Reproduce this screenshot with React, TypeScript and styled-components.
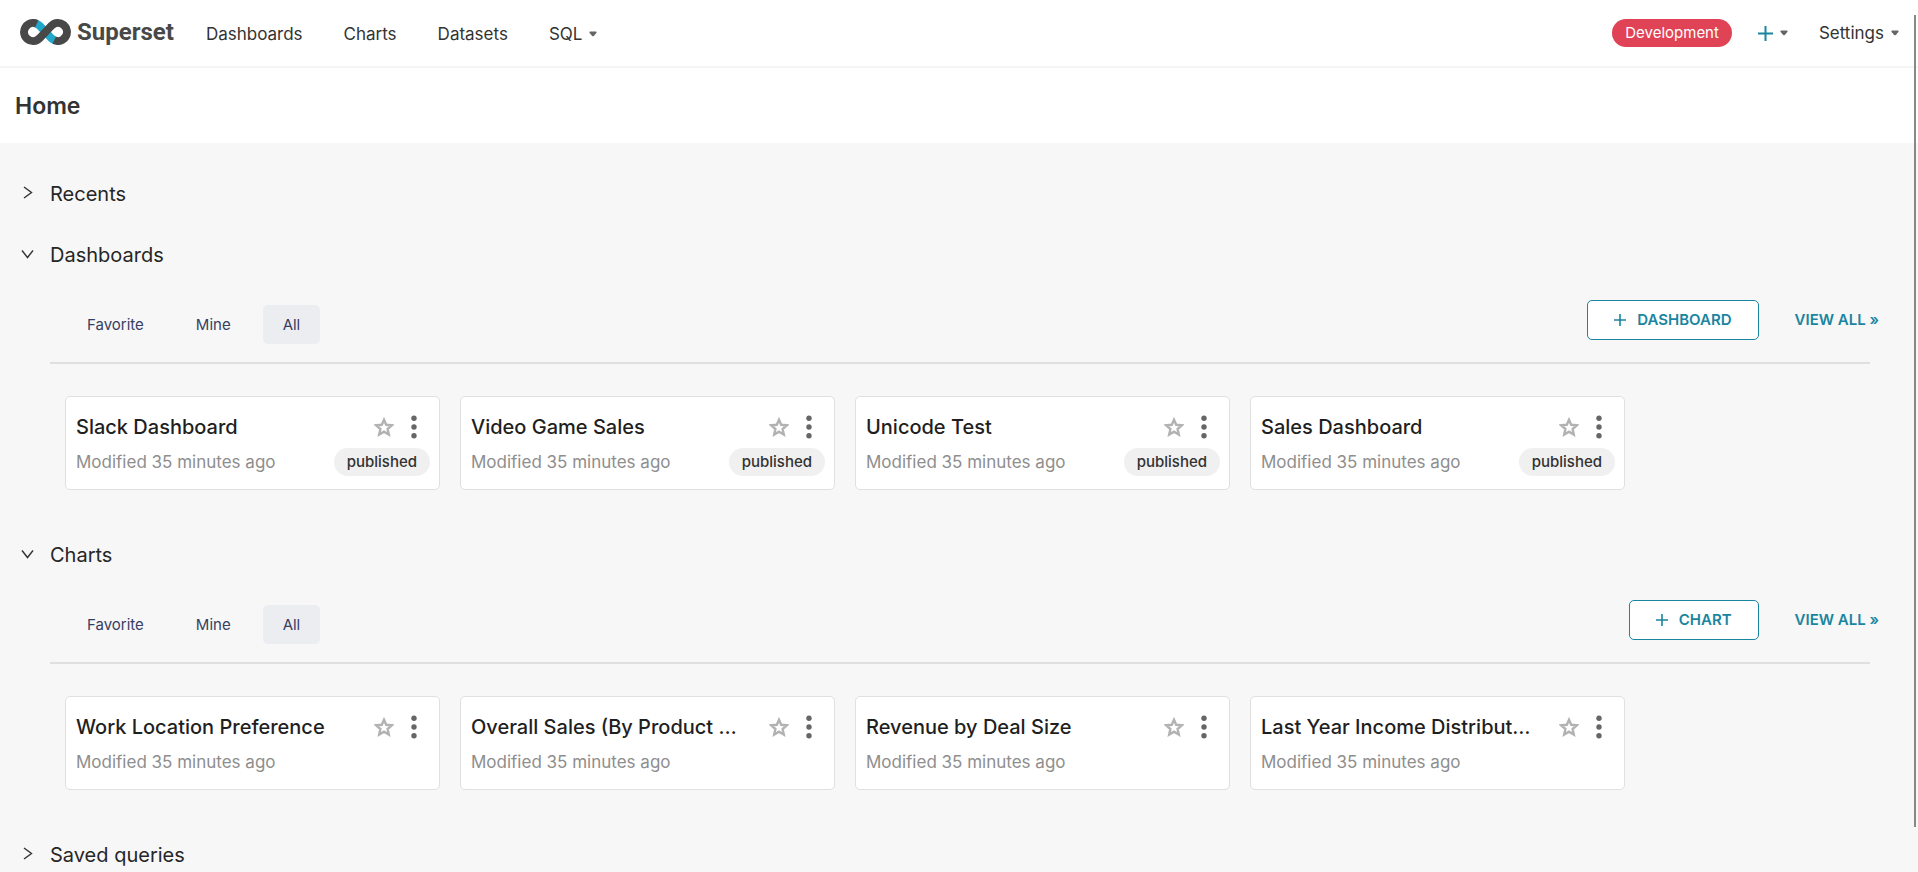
import React, { useState } from 'react';
import styled, { createGlobalStyle } from 'styled-components';

const teal = '#1a85a0';

const GlobalStyle = createGlobalStyle`
  *, *::before, *::after { box-sizing: border-box; }
  body {
    margin: 0;
    background: #f7f7f7;
    color: #333333;
    font-family: Inter, "Liberation Sans", sans-serif;
    font-size: 17px;
    line-height: 28px;
  }
  h1, h2, h3, p { margin: 0; padding: 0; }
  button { font: inherit; color: inherit; border: 0; padding: 0; background: none; cursor: pointer; }
  a { color: inherit; text-decoration: none; }
  svg { display: block; flex: none; }
`;

const Shell = styled.div`
  height: 100vh;
  overflow-y: auto;
  scrollbar-width: none;
`;

const ScrollThumb = styled.div`
  position: fixed;
  top: 15px;
  bottom: 45px;
  right: 2px;
  width: 2px;
  background: #888888;
`;

const Navbar = styled.header`
  display: flex;
  align-items: center;
  justify-content: space-between;
  height: 68px;
  padding: 0 19px 0 20px;
  border-bottom: 2px solid #f5f5f5;
  background: #ffffff;
`;

const Brand = styled.a`
  display: flex;
  align-items: center;
  gap: 6px;
  margin-right: 32px;
  padding-bottom: 3px;
  color: #484848;
  font-family: Roboto, "Liberation Sans", sans-serif;
  font-size: 24px;
  font-weight: 700;
`;

const NavGroup = styled.nav`
  display: flex;
  align-items: center;
`;

const NavLinks = styled.div`
  display: flex;
  gap: 41px;
  padding-top: 1px;
`;

const NavItem = styled.a`
  font-size: 17px;
`;

const NavMenu = styled.button<{ $gap?: number }>`
  display: flex;
  align-items: center;
  gap: 7px;
  margin-left: ${(p) => p.$gap || 0}px;
  font-size: 17px;
`;

const EnvTag = styled.span`
  padding: 0 13px;
  border-radius: 14px;
  background: #e04355;
  color: #ffffff;
  font-size: 15px;
`;

const PageHeader = styled.div`
  height: 75px;
  padding: 24px 15px;
  background: #ffffff;
`;

const PageTitle = styled.h1`
  font-size: 23px;
  font-weight: 600;
  line-height: 28px;
`;

const Content = styled.main`
  padding: 20px 48px 0 0;
`;

const SectionToggle = styled.button`
  display: flex;
  align-items: center;
  gap: 15px;
  width: 100%;
  height: 61px;
  padding-left: 20px;
  color: #262626;
  font-size: 20px;
  text-align: left;
`;

const SectionBody = styled.div`
  padding: 15px 0 34px 50px;
`;

const Toolbar = styled.div`
  display: flex;
  align-items: flex-start;
  justify-content: space-between;
  height: 64px;
  padding-left: 17px;
  border-bottom: 2px solid #e0e0e0;
`;

const Tabs = styled.div`
  display: flex;
  gap: 12px;
  padding-top: 5px;
`;

const Tab = styled.button<{ $active: boolean }>`
  height: 39px;
  padding: 0 20px;
  border-radius: 5px;
  background: ${(p) => (p.$active ? '#ecedf1' : 'transparent')};
  color: #363e63;
  font-size: 15px;
`;

const Actions = styled.div`
  display: flex;
  align-items: center;
  gap: 36px;
  height: 40px;
  margin-right: -9px;
  color: ${teal};
  font-size: 15px;
  font-weight: 600;
`;

const CreateButton = styled.button`
  display: flex;
  align-items: center;
  gap: 11px;
  height: 40px;
  padding: 0 26px;
  border: 1px solid ${teal};
  border-radius: 5px;
  background: #ffffff;
`;

const CardGrid = styled.div`
  display: grid;
  grid-template-columns: repeat(auto-fit, 375px);
  gap: 20px;
  padding: 32px 0 0 15px;
`;

const Card = styled.article`
  height: 94px;
  padding: 15px 9px 0 10px;
  border: 1px solid #e0e0e0;
  border-radius: 5px;
  background: #ffffff;
`;

const CardRow = styled.div`
  display: flex;
  align-items: center;
  justify-content: space-between;
`;

const CardTitle = styled.h3`
  max-width: 270px;
  overflow: hidden;
  color: #1f1f1f;
  font-size: 20px;
  font-weight: 500;
  line-height: 30px;
  text-overflow: ellipsis;
  white-space: nowrap;
`;

const CardActions = styled.div`
  display: flex;
  align-items: center;
  gap: 16px;
  padding-right: 12px;
`;

const CardMeta = styled(CardRow)`
  height: 36px;
  padding-top: 4px;
`;

const Modified = styled.p`
  color: #8e8e8e;
  font-size: 17px;
`;

const StatusTag = styled.span`
  padding: 0 13px;
  border-radius: 14px;
  background: #f0f0f0;
  color: #323232;
  font-size: 15px;
  font-weight: 500;
`;

const Logo = () => (
  <svg width="51" height="26" viewBox="0 0 51 26" fill="none" strokeWidth="8" aria-hidden="true">
    <path d="M16.4 4.7Q18.2 5.4 19.4 6.6L31.6 19.4Q32.8 20.6 34.6 21.3" stroke="#20a7c9" />
    <path d="M16.8 4.8A9 9 0 1 0 19.4 19.4L31.6 6.6A9 9 0 1 1 34.2 21.2" stroke="#484848" />
  </svg>
);

const Caret = () => (
  <svg width="8" height="6" viewBox="0 0 8 6" fill="#666666" aria-hidden="true">
    <path d="M1 0.5h6q1 0.4 0.4 1.4L4.8 4.9q-0.8 0.8-1.6 0L0.6 1.9Q0 0.9 1 0.5Z" />
  </svg>
);

const Plus = ({ size }: { size: number }) => (
  <svg width={size} height={size} viewBox="0 0 12 12" fill="none" stroke={teal} strokeWidth="1.6" aria-hidden="true">
    <path d="M6 0v12M0 6h12" />
  </svg>
);

const Chevron = ({ open }: { open: boolean }) => (
  <svg width="15" height="15" viewBox="0 0 15 15" fill="none" stroke="#333333" strokeWidth="1.4" aria-hidden="true">
    <path d={open ? 'M2 3.5l5.5 7L13 3.5' : 'M4 1l7.5 5.5L4 12'} />
  </svg>
);

const Star = () => (
  <svg width="20" height="20" viewBox="0 0 20 20" fill="none" stroke="#b2b2b2" strokeWidth="2.4" aria-hidden="true">
    <path d="M10 2.8l2.2 5 5.6.5-4.2 3.7 1.2 5.5L10 14.6 5.2 17.5l1.2-5.5L2.2 8.3l5.6-.5z" />
  </svg>
);

const Dots = () => (
  <svg width="8" height="24" viewBox="0 0 8 24" fill="#666666" aria-hidden="true">
    <circle cx="4" cy="3.3" r="2.7" />
    <circle cx="4" cy="12" r="2.7" />
    <circle cx="4" cy="20.7" r="2.7" />
  </svg>
);

type SectionProps = {
  title: string;
  createLabel?: string;
  items?: string[];
  status?: string;
};

const tabNames = ['Favorite', 'Mine', 'All'];

function Section({ title, createLabel, items = [], status }: SectionProps) {
  const [open, setOpen] = useState(items.length > 0);
  const [tab, setTab] = useState('All');
  return (
    <section>
      <SectionToggle aria-expanded={open} onClick={() => setOpen(!open)}>
        <Chevron open={open} />
        {title}
      </SectionToggle>
      {open && items.length > 0 && (
        <SectionBody>
          <Toolbar>
            <Tabs role="tablist">
              {tabNames.map((name) => (
                <Tab key={name} role="tab" aria-selected={tab === name} $active={tab === name} onClick={() => setTab(name)}>
                  {name}
                </Tab>
              ))}
            </Tabs>
            <Actions>
              <CreateButton>
                <Plus size={12} />
                {createLabel}
              </CreateButton>
              <a href="#all">VIEW ALL »</a>
            </Actions>
          </Toolbar>
          <CardGrid>
            {items.map((item) => (
              <Card key={item}>
                <CardRow>
                  <CardTitle>{item}</CardTitle>
                  <CardActions>
                    <button aria-label="Favorite"><Star /></button>
                    <button aria-label="More options"><Dots /></button>
                  </CardActions>
                </CardRow>
                <CardMeta>
                  <Modified>Modified 35 minutes ago</Modified>
                  {status && <StatusTag>{status}</StatusTag>}
                </CardMeta>
              </Card>
            ))}
          </CardGrid>
        </SectionBody>
      )}
    </section>
  );
}

export default function App() {
  return (
    <>
      <GlobalStyle />
      <Shell>
        <Navbar>
          <NavGroup>
            <Brand href="#home"><Logo />Superset</Brand>
            <NavLinks>
              <NavItem href="#dashboards">Dashboards</NavItem>
              <NavItem href="#charts">Charts</NavItem>
              <NavItem href="#datasets">Datasets</NavItem>
              <NavMenu>SQL<Caret /></NavMenu>
            </NavLinks>
          </NavGroup>
          <NavGroup>
            <EnvTag>Development</EnvTag>
            <NavMenu $gap={26} aria-label="Create new"><Plus size={15} /><Caret /></NavMenu>
            <NavMenu $gap={31}>Settings<Caret /></NavMenu>
          </NavGroup>
        </Navbar>
        <PageHeader>
          <PageTitle>Home</PageTitle>
        </PageHeader>
        <Content>
          <Section title="Recents" />
          <Section
            title="Dashboards"
            createLabel="DASHBOARD"
            status="published"
            items={['Slack Dashboard', 'Video Game Sales', 'Unicode Test', 'Sales Dashboard']}
          />
          <Section
            title="Charts"
            createLabel="CHART"
            items={[
              'Work Location Preference',
              'Overall Sales (By Product Line)',
              'Revenue by Deal Size',
              'Last Year Income Distribution',
            ]}
          />
          <Section title="Saved queries" />
        </Content>
      </Shell>
      <ScrollThumb />
    </>
  );
}
